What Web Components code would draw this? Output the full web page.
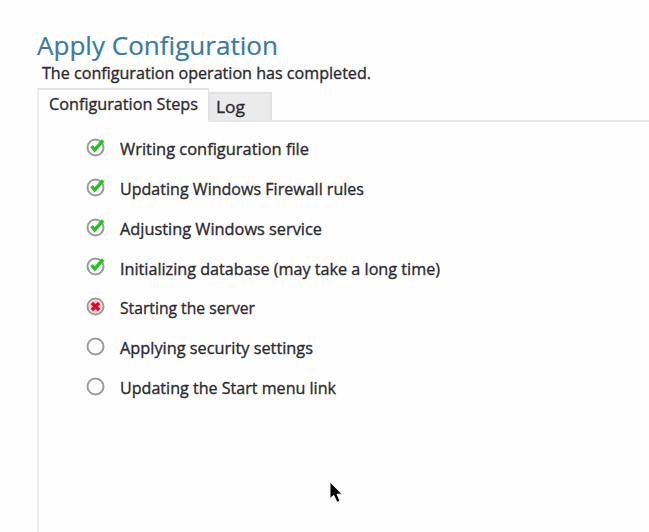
<!DOCTYPE html>
<html lang="en">
<head>
<meta charset="utf-8">
<title>Apply Configuration</title>
<style>
body{margin:0;background:#fefefe;overflow:hidden;font-family:"Open Sans","Noto Sans",sans-serif;color:#2b2b31}
</style>
</head>
<body>
<config-page></config-page>
<script>
// One line of text, condensed horizontally to the width given in pixels.
class FitText extends HTMLElement{
  connectedCallback(){
    this.attachShadow({mode:'open'}).innerHTML=`<style>
      :host{display:block;white-space:nowrap}
      span{display:inline-block;transform-origin:0 50%}
    </style><span><slot></slot></span>`;
    const s=this.shadowRoot.querySelector('span');
    const w=s.getBoundingClientRect().width;
    const target=+this.getAttribute('width');
    this.style.width=target+'px';
    if(w)s.style.transform=`scaleX(${target/w})`;
  }
}

class StatusIcon extends HTMLElement{
  connectedCallback(){
    const marks={
      done:'<path d="M5.5 9.2 8.7 12.9 17.1 3.5" fill="none" stroke="#25c425" stroke-width="3.4"/>',
      failed:'<circle cx="9.5" cy="10.5" r="6.6" fill="#f6cdd2"/><path d="M5.9 6.9 13.1 14.1M13.1 6.9 5.9 14.1" stroke="#e00824" stroke-width="3.6"/>',
      pending:''
    };
    this.attachShadow({mode:'open'}).innerHTML=`<style>:host{display:block;width:20px;height:20px}svg{display:block}</style>
      <svg width="20" height="20" viewBox="0 0 20 20"><circle cx="9.5" cy="10.5" r="8" fill="#fdfdfd" stroke="#9a9a9a" stroke-width="2"/>${marks[this.getAttribute('state')]}</svg>`;
  }
}

class ConfigStep extends HTMLElement{
  connectedCallback(){
    this.attachShadow({mode:'open'}).innerHTML=`<style>
      :host{display:flex;height:39.75px;font-size:16.4px;line-height:24px}
      status-icon{margin:0 14px 0 0}
      fit-text{margin-top:.3px;-webkit-text-stroke:.35px currentColor}
    </style><status-icon state="${this.getAttribute('state')}"></status-icon>
    <fit-text width="${this.getAttribute('width')}">${this.getAttribute('label')}</fit-text>`;
  }
}

class TabItem extends HTMLElement{
  connectedCallback(){
    this.attachShadow({mode:'open'}).innerHTML=`<style>
      :host{display:block;box-sizing:border-box;width:63px;height:30px;border:2px solid #e2e2e2;border-left-width:1px;border-bottom-color:#e8e8e8;background:#ebebeb;padding:1px 0 0 6px;font-size:16.4px;line-height:24px;-webkit-text-stroke:.35px currentColor}
      :host([selected]){width:172px;height:33px;border:2px solid #e2e2e2;border-left-color:#ececec;border-right-width:1px;border-bottom:0;background:#fefefe;padding:2px 0 0 10px}
    </style><slot></slot>`;
  }
}

class MousePointer extends HTMLElement{
  connectedCallback(){
    this.attachShadow({mode:'open'}).innerHTML=`<style>:host{position:absolute;left:328px;top:480px}svg{display:block}</style>
    <svg width="18" height="26" viewBox="0 0 18 26"><path d="M2 2V18.5L5.7 15.3 9 22.3 12 21 9 14.2H14Z" fill="#050505" stroke="#f1f1f1" stroke-width="1"/></svg>`;
  }
}

class ConfigPage extends HTMLElement{
  connectedCallback(){
    this.attachShadow({mode:'open'}).innerHTML=`<style>
      :host{display:flex;flex-direction:column;position:relative;box-sizing:border-box;width:649px;height:532px;padding:28px 0 0 37px;overflow:hidden}
      h1{margin:0;font-weight:400;font-size:25px;line-height:34px;color:#3b7aa3;-webkit-text-stroke:.2px currentColor}
      .message{margin-left:5px;height:26px;font-size:16px;line-height:22px;-webkit-text-stroke:.35px currentColor}
      nav{display:flex;align-items:flex-end;height:34px}
      nav tab-item[selected]{margin-bottom:1px}
      .rule{height:2px;margin:-2px 0 0 172px;background:#e6e6e6}
      section{flex:1;border-left:2px solid #ececec;padding:16px 0 0 47px;margin-top:-1px}
    </style>
    <h1><fit-text width="241">Apply Configuration</fit-text></h1>
    <div class="message"><fit-text width="329">The configuration operation has completed.</fit-text></div>
    <nav>
      <tab-item selected><fit-text width="149">Configuration Steps</fit-text></tab-item>
      <tab-item><fit-text width="29">Log</fit-text></tab-item>
    </nav>
    <div class="rule"></div>
    <section>
      <config-step state="done" width="189" label="Writing configuration file"></config-step>
      <config-step state="done" width="244" label="Updating Windows Firewall rules"></config-step>
      <config-step state="done" width="202" label="Adjusting Windows service"></config-step>
      <config-step state="done" width="320" label="Initializing database (may take a long time)"></config-step>
      <config-step state="failed" width="135" label="Starting the server"></config-step>
      <config-step state="pending" width="193" label="Applying security settings"></config-step>
      <config-step state="pending" width="216" label="Updating the Start menu link"></config-step>
    </section>
    <mouse-pointer></mouse-pointer>`;
  }
}
customElements.define('fit-text',FitText);
customElements.define('status-icon',StatusIcon);
customElements.define('config-step',ConfigStep);
customElements.define('tab-item',TabItem);
customElements.define('mouse-pointer',MousePointer);
customElements.define('config-page',ConfigPage);
</script>
</body>
</html>
